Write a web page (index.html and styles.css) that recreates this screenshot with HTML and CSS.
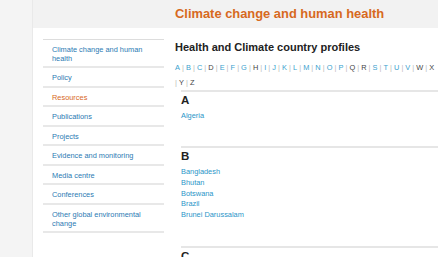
FILE: index.html
```html
<!DOCTYPE html>
<html lang="en">
<head>
  <meta charset="UTF-8" />
  <title>Health and Climate country profiles</title>
  <link rel="stylesheet" href="styles.css">
</head>
<body>
  <div class="page">
    <header class="site-header">
      <span class="site-title">Climate change and human health</span>
    </header>

    <div class="content">
      <nav class="sidenav">
        <a href="#">Climate change and human health</a>
        <a href="#">Policy</a>
        <a href="#" class="active">Resources</a>
        <a href="#">Publications</a>
        <a href="#">Projects</a>
        <a href="#">Evidence and monitoring</a>
        <a href="#">Media centre</a>
        <a href="#">Conferences</a>
        <a href="#">Other global environmental change</a>
      </nav>

      <main class="main">
        <h1>Health and Climate country profiles</h1>
        <div class="alpha">
          <a href="#a">A</a><span class="sep">|</span><a href="#b">B</a><span class="sep">|</span><a href="#c">C</a><span class="sep">|</span><span class="off">D</span><span class="sep">|</span><a href="#e">E</a><span class="sep">|</span><a href="#f">F</a><span class="sep">|</span><a href="#g">G</a><span class="sep">|</span><span class="off">H</span><span class="sep">|</span><a href="#i">I</a><span class="sep">|</span><a href="#j">J</a><span class="sep">|</span><a href="#k">K</a><span class="sep">|</span><a href="#l">L</a><span class="sep">|</span><a href="#m">M</a><span class="sep">|</span><a href="#n">N</a><span class="sep">|</span><a href="#o">O</a><span class="sep">|</span><a href="#p">P</a><span class="sep">|</span><span class="off">Q</span><span class="sep">|</span><span class="off">R</span><span class="sep">|</span><a href="#s">S</a><span class="sep">|</span><a href="#t">T</a><span class="sep">|</span><a href="#u">U</a><span class="sep">|</span><a href="#v">V</a><span class="sep">|</span><span class="off">W</span><span class="sep">|</span><span class="off">X</span><br><span class="sep first">|</span><span class="off">Y</span><span class="sep">|</span><span class="off">Z</span>
        </div>

        <section class="letter" id="a">
          <h2>A</h2>
          <ul>
            <li><a href="#">Algeria</a></li>
          </ul>
        </section>

        <section class="letter" id="b">
          <h2>B</h2>
          <ul>
            <li><a href="#">Bangladesh</a></li>
            <li><a href="#">Bhutan</a></li>
            <li><a href="#">Botswana</a></li>
            <li><a href="#">Brazil</a></li>
            <li><a href="#">Brunei Darussalam</a></li>
          </ul>
        </section>

        <section class="letter" id="c">
          <h2>C</h2>
        </section>
      </main>
    </div>
  </div>
</body>
</html>
```

FILE: styles.css
```css
body {
  margin: 0;
  background: #f4f4f4;
  font-family: "Liberation Sans", Arial, sans-serif;
  color: #333;
  overflow: hidden;
  height: 257px;
}

a {
  text-decoration: none;
}

.page {
  margin-left: 32px;
  background: #fff;
  border-left: 1px solid #e9e9e9;
  height: 257px;
  overflow: hidden;
}

.site-header {
  height: 28px;
  background: #f2f2f2;
  padding-left: 142px;
  box-sizing: border-box;
  padding-top: 4px;
}

.site-title {
  color: #d7691e;
  font-weight: bold;
  font-size: 12.9px;
  white-space: nowrap;
}

.content {
  display: flex;
  gap: 11px;
  padding-left: 10px;
  padding-top: 11px;
}

.sidenav {
  width: 121px;
  flex-shrink: 0;
  border-top: 1px solid #ddd;
  display: flex;
  flex-direction: column;
  align-self: flex-start;
}

.sidenav a {
  display: block;
  padding: 5px 9px 3.5px 9px;
  font-size: 7.4px;
  line-height: 9px;
  color: #2b7ab3;
  border-bottom: 2px solid #e8e8e8;
}

.sidenav a:first-child {
  padding-bottom: 3px;
}

.sidenav a.active {
  color: #d7691e;
}

.main {
  flex: 1;
  min-width: 0;
}

.main h1 {
  margin: 0;
  font-size: 11px;
  line-height: 15px;
  color: #222;
  padding-top: 1px;
}

.alpha {
  margin-top: 6px;
  font-size: 7.4px;
  line-height: 14.5px;
  color: #444;
  white-space: nowrap;
}

.alpha a {
  color: #3a9fce;
}

.alpha .sep {
  color: #bbb;
  margin: 0 2.05px;
}

.alpha .sep.first {
  margin-left: 0;
}

.letter {
  box-sizing: border-box;
  margin-left: 6px;
  border-top: 2px solid #e6e6e6;
  height: 56px;
  padding-top: 1px;
}

.letter + .letter {
  height: 100px;
}

.letter h2 {
  margin: 0;
  font-size: 11.5px;
  line-height: 14px;
  color: #222;
}

.letter ul {
  list-style: none;
  margin: 4px 0 0;
  padding: 0;
}

.letter li {
  font-size: 7.4px;
  line-height: 10.8px;
}

.letter li a {
  color: #2a95c8;
}
```
